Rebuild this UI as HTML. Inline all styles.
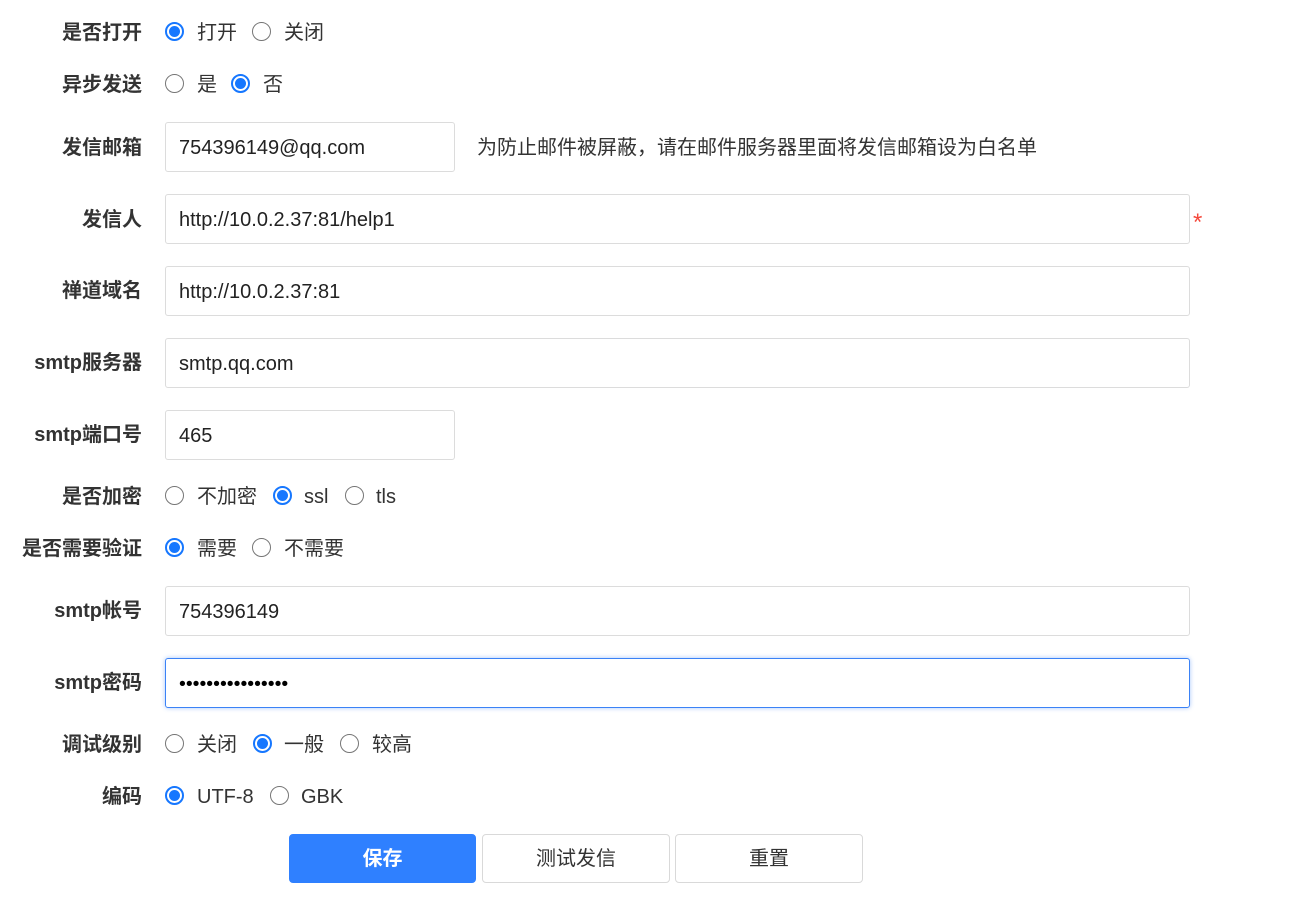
<!DOCTYPE html>
<html><head><meta charset="utf-8"><style>
*{margin:0;padding:0;box-sizing:border-box}
body{width:1291px;height:897px;background:#fff;font-family:"Liberation Sans","Noto Sans CJK SC",sans-serif;font-size:20px;color:#333;position:relative;overflow:hidden}
.l{position:absolute;right:1149px;font-weight:bold;color:#333;white-space:nowrap;line-height:24px;margin-top:1px}
.t{position:absolute;white-space:nowrap;line-height:24px;color:#333;margin-top:1px}
.r{position:absolute;width:19px;height:19px;border-radius:50%;border:1.5px solid #767676;background:#fff}
.r.c{border:2px solid #1677ff}
.r.c::after{content:"";position:absolute;left:2px;top:2px;width:11px;height:11px;border-radius:50%;background:#1677ff}
.i{position:absolute;left:165px;height:50px;border:1px solid #dcdcdc;border-radius:3px;padding-left:13px;line-height:50px;color:#222;font-size:20px}
.b{position:absolute;top:834px;height:49px;border:1px solid #d9d9d9;border-radius:4px;text-align:center;line-height:49px;color:#333;background:#fff}
</style></head><body>
<div class="l" style="top:20px">是否打开</div>
<div class="r c" style="left:165px;top:22px"></div><div class="t" style="left:197px;top:20px">打开</div>
<div class="r" style="left:252px;top:22px"></div><div class="t" style="left:284px;top:20px">关闭</div>

<div class="l" style="top:72px">异步发送</div>
<div class="r" style="left:165px;top:74px"></div><div class="t" style="left:197px;top:72px">是</div>
<div class="r c" style="left:231px;top:74px"></div><div class="t" style="left:263px;top:72px">否</div>

<div class="l" style="top:135px">发信邮箱</div>
<div class="i" style="top:122px;width:290px">754396149@qq.com</div>
<div class="t" style="left:477px;top:135px">为防止邮件被屏蔽，请在邮件服务器里面将发信邮箱设为白名单</div>

<div class="l" style="top:207px">发信人</div>
<div class="i" style="top:194px;width:1025px">http://10.0.2.37:81/help1</div>
<div class="t" style="left:1193px;top:210px;color:#f5483b;font-size:24px">*</div>

<div class="l" style="top:278px">禅道域名</div>
<div class="i" style="top:266px;width:1025px">http://10.0.2.37:81</div>

<div class="l" style="top:350px">smtp服务器</div>
<div class="i" style="top:338px;width:1025px">smtp.qq.com</div>

<div class="l" style="top:422px">smtp端口号</div>
<div class="i" style="top:410px;width:290px">465</div>

<div class="l" style="top:484px">是否加密</div>
<div class="r" style="left:165px;top:486px"></div><div class="t" style="left:197px;top:484px">不加密</div>
<div class="r c" style="left:273px;top:486px"></div><div class="t" style="left:304px;top:484px">ssl</div>
<div class="r" style="left:345px;top:486px"></div><div class="t" style="left:376px;top:484px">tls</div>

<div class="l" style="top:536px">是否需要验证</div>
<div class="r c" style="left:165px;top:538px"></div><div class="t" style="left:197px;top:536px">需要</div>
<div class="r" style="left:252px;top:538px"></div><div class="t" style="left:284px;top:536px">不需要</div>

<div class="l" style="top:598px">smtp帐号</div>
<div class="i" style="top:586px;width:1025px">754396149</div>

<div class="l" style="top:670px">smtp密码</div>
<div class="i" style="top:658px;width:1025px;border-color:#3b82f6;box-shadow:0 0 5px rgba(59,130,246,.45);color:#000;font-size:19.5px">••••••••••••••••</div>

<div class="l" style="top:732px">调试级别</div>
<div class="r" style="left:165px;top:734px"></div><div class="t" style="left:197px;top:732px">关闭</div>
<div class="r c" style="left:253px;top:734px"></div><div class="t" style="left:284px;top:732px">一般</div>
<div class="r" style="left:340px;top:734px"></div><div class="t" style="left:372px;top:732px">较高</div>

<div class="l" style="top:784px">编码</div>
<div class="r c" style="left:165px;top:786px"></div><div class="t" style="left:197px;top:784px">UTF-8</div>
<div class="r" style="left:270px;top:786px"></div><div class="t" style="left:301px;top:784px">GBK</div>

<div class="b" style="left:289px;width:187px;background:#2f80ff;border-color:#2f80ff;color:#fff;font-weight:bold">保存</div>
<div class="b" style="left:482px;width:188px">测试发信</div>
<div class="b" style="left:675px;width:188px">重置</div>
</body></html>
